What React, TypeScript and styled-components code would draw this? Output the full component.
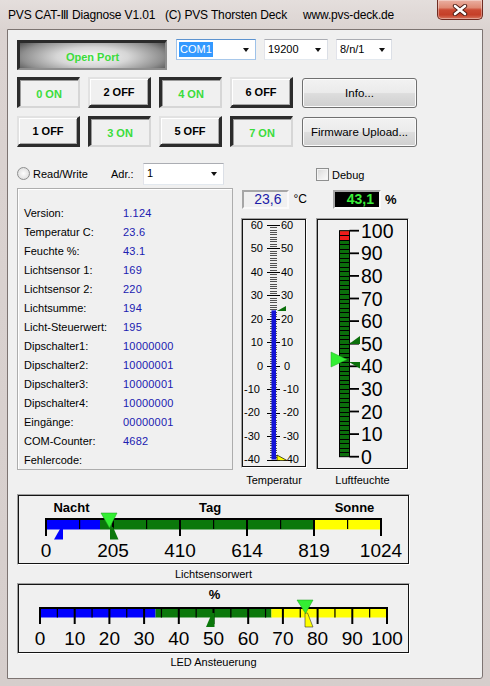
import React from "react";
import styled, { createGlobalStyle } from "styled-components";

const GlobalStyle = createGlobalStyle`
  html, body { margin: 0; padding: 0; background: #d8d1cf; }
  body { font-family: "Liberation Sans", Arial, sans-serif; font-size: 11px; color: #000; }
  * { box-sizing: border-box; }
`;

const UI_FONT = `"Liberation Sans", Arial, sans-serif`;

const Window = styled.div`
  width: 490px;
  height: 686px;
  display: flex;
  flex-direction: column;
  background: linear-gradient(180deg, #e4dedc 0px, #dbd3d1 30px, #d6cecc 100%);
  overflow: hidden;
`;

const TitleBar = styled.div`
  height: 29px;
  display: flex;
  align-items: flex-start;
  padding-left: 8px;
  flex-shrink: 0;
`;

const TitleText = styled.div`
  flex: 1;
  display: flex;
  padding-top: 7px;
  font-family: "Liberation Sans", "DejaVu Sans", sans-serif;
  font-size: 12px;
  line-height: 16px;
  letter-spacing: -0.15px;
  color: #000;
  white-space: nowrap;
`;

const TitleSeg = styled.span<{ $w?: number }>`
  display: inline-block;
  width: ${(p) => (p.$w ? `${p.$w}px` : "auto")};
`;

const CloseButton = styled.div`
  width: 46px;
  height: 20px;
  margin-right: 7px;
  display: flex;
  align-items: center;
  justify-content: center;
  border: 1px solid #6f2b21;
  border-top: none;
  border-radius: 0 0 5px 5px;
  background: linear-gradient(180deg, #eab0a2 0%, #df8a74 40%, #cb4a33 52%, #c53f28 78%, #d7765f 100%);
  box-shadow: inset 0 0 0 1px rgba(255, 255, 255, 0.35);
`;

const ClientArea = styled.div`
  margin: 0 7px;
  height: 650px;
  border: 1px solid #7d7472;
  border-radius: 0 0 3px 0;
  background: #f0f0f0;
  padding: 9px 0 0 9px;
  display: flex;
  flex-direction: column;
  font-family: ${UI_FONT};
  font-size: 11px;
`;

const Row = styled.div<{ $mt?: number; $h: number }>`
  display: flex;
  align-items: flex-start;
  height: ${(p) => p.$h}px;
  margin-top: ${(p) => p.$mt ?? 0}px;
  flex-shrink: 0;
`;

const OpenPortButton = styled.div`
  width: 150px;
  height: 30px;
  margin-top: 1px;
  display: flex;
  align-items: center;
  justify-content: center;
  border-style: solid;
  border-width: 3px 2px 2px 3px;
  border-color: #2b2b2b #8e8e8e #8e8e8e #2b2b2b;
  background: radial-gradient(ellipse 62% 95% at 50% 55%, #f7f7f7 0%, #d6d6d6 40%, #8f8f8f 78%, #505050 100%);
  color: #3bdc3b;
  font-weight: bold;
  font-size: 11px;
  padding-top: 2px;
`;

const ComboBox = styled.div<{ $w: number; $ml: number; $focused?: boolean; $h?: number }>`
  width: ${(p) => p.$w}px;
  height: ${(p) => p.$h ?? 21}px;
  margin-left: ${(p) => p.$ml}px;
  display: flex;
  align-items: center;
  justify-content: space-between;
  background: #fff;
  border: 1px solid;
  border-color: ${(p) => (p.$focused ? "#5d93cf #9ec2e9 #a8c8ea #9ec2e9" : "#abadb3 #dbdfe6 #e3e9ef #e2e3ea")};
  padding-left: 2px;
`;

const ComboText = styled.span<{ $selected?: boolean }>`
  font-size: 11px;
  line-height: 15px;
  padding: 0 1px;
  background: ${(p) => (p.$selected ? "#3399ff" : "transparent")};
  color: ${(p) => (p.$selected ? "#fff" : "#000")};
`;

const ComboArrow = styled.span`
  width: 0;
  height: 0;
  margin-right: 6px;
  border-left: 3.5px solid transparent;
  border-right: 3.5px solid transparent;
  border-top: 4px solid #111;
`;

const ButtonGrid = styled.div`
  display: flex;
  gap: 8px;
`;

const ToggleButton = styled.div<{ $on: boolean }>`
  width: 63px;
  height: 31px;
  display: flex;
  align-items: center;
  justify-content: center;
  border-style: solid;
  border-width: ${(p) => (p.$on ? "3px 2px 2px 3px" : "2px 3px 3px 2px")};
  border-color: ${(p) => (p.$on ? "#2c2c2c #d6d6d6 #d6d6d6 #2c2c2c" : "#e2e2e2 #2c2c2c #2c2c2c #e2e2e2")};
  background: #f0f0f0;
  box-shadow: ${(p) => (p.$on ? "inset 1px 1px 0 #9a9a9a" : "inset 1px 1px 0 #ffffff, inset -1px -1px 0 #a8a8a8")};
  color: ${(p) => (p.$on ? "#3bdc3b" : "#000")};
  font-weight: bold;
  font-size: 11px;
  padding-top: ${(p) => (p.$on ? 2 : 0)}px;
`;

const SysButton = styled.div`
  width: 115px;
  height: 30px;
  margin-top: 1px;
  margin-left: 9px;
  display: flex;
  align-items: center;
  justify-content: center;
  border: 1px solid #707070;
  border-radius: 3px;
  background: linear-gradient(180deg, #f2f2f2 0%, #ebebeb 48%, #dddddd 52%, #cfcfcf 100%);
  box-shadow: inset 0 0 0 1px #fbfbfb;
  font-size: 11.5px;
  color: #000;
`;

const OptionRow = styled.div`
  display: flex;
  align-items: center;
  height: 23px;
  margin-top: 15px;
  flex-shrink: 0;
`;

const RadioWrap = styled.label`
  width: 94px;
  display: flex;
  align-items: center;
  gap: 3px;
  font-size: 11px;
`;

const RadioCircle = styled.span`
  width: 13px;
  height: 13px;
  border-radius: 50%;
  border: 1px solid #8e8f8f;
  background: radial-gradient(circle at 50% 50%, #fdfdfd 0%, #e8e8e8 55%, #d2d2d2 100%);
`;

const FieldLabel = styled.span`
  width: 32px;
  font-size: 11px;
`;

const CheckWrap = styled.label`
  margin-left: 92px;
  display: flex;
  align-items: center;
  gap: 3px;
  font-size: 11px;
  margin-top: 2px;
`;

const CheckBox = styled.span`
  width: 13px;
  height: 13px;
  border: 1px solid #8e8f8f;
  box-shadow: inset 0 0 0 1px #f4f4f4;
  background: linear-gradient(135deg, #d8d8d8 0%, #ededed 55%, #fcfcfc 100%);
`;

const MainArea = styled.div`
  display: flex;
  align-items: flex-start;
  height: 300px;
  margin-top: 3px;
  flex-shrink: 0;
`;

const DataPanel = styled.div`
  width: 216px;
  height: 282px;
  border: 1px solid #adadad;
  box-shadow: inset 1px 1px 0 #ffffff;
  padding: 14px 0 0 6px;
  display: grid;
  grid-template-columns: 99px 1fr;
  grid-auto-rows: 19px;
  align-items: center;
  align-content: start;
`;

const DataLabel = styled.span`
  font-size: 11px;
  color: #000;
`;

const DataValue = styled.span`
  font-size: 11px;
  color: #2020b0;
  letter-spacing: 0.2px;
`;

const InstrumentGrid = styled.div`
  margin-left: 8px;
  display: grid;
  grid-template-columns: 66px 93px;
  grid-template-rows: 22px auto auto;
  column-gap: 9px;
`;

const ReadoutCell = styled.div<{ $ml: number }>`
  display: flex;
  align-items: center;
  padding-left: ${(p) => p.$ml}px;
`;

const ReadoutBox = styled.div<{ $dark?: boolean }>`
  width: 48px;
  height: 19px;
  display: flex;
  align-items: center;
  justify-content: flex-end;
  padding-right: 5px;
  border: 2px solid;
  border-color: #a6a6a6 #fafafa #fafafa #a6a6a6;
  background: ${(p) => (p.$dark ? "#000" : "#f0f0f0")};
  color: ${(p) => (p.$dark ? "#3aee3a" : "#1c1ca8")};
  font-weight: ${(p) => (p.$dark ? "bold" : "normal")};
  font-size: 14px;
`;

const Unit = styled.span<{ $bold?: boolean }>`
  margin-left: ${(p) => (p.$bold ? 4 : 5)}px;
  font-size: ${(p) => (p.$bold ? 13 : 12)}px;
  font-weight: ${(p) => (p.$bold ? "bold" : "normal")};
`;

const GaugeFrame = styled.div<{ $mt?: number }>`
  align-self: start;
  justify-self: start;
  margin-top: ${(p) => p.$mt ?? 0}px;
  border: 1px solid;
  border-color: #a0a0a0 #ffffff #ffffff #a0a0a0;
`;

const GaugeInner = styled.div`
  border: 1px solid #141414;
  background: #f0f0f0;
  svg { display: block; }
`;

const Caption = styled.div<{ $mt: number }>`
  margin-top: ${(p) => p.$mt}px;
  text-align: center;
  font-size: 11px;
  line-height: 14px;
`;

const GaugeSection = styled.div<{ $mt: number }>`
  width: 393px;
  margin-top: ${(p) => p.$mt}px;
  display: flex;
  flex-direction: column;
  flex-shrink: 0;
`;

const SVG_FONT = "Liberation Sans, Arial, sans-serif";

const crisp = (y: number) => Math.round(y) + 0.5;

/* ---------- Thermometer ---------- */
const tY = (v: number) => 225 + (60 - v) * 2.345;

const Thermometer: React.FC = () => {
  const majors = [60, 50, 40, 30, 20, 10, 0, -10, -20, -30, -40];
  const minors: number[] = [];
  for (let v = -40; v <= 60; v++) if (v % 10 !== 0) minors.push(v);
  const top = tY(23.6);
  return (
    <svg width={62} height={246} viewBox="243 220 62 246">
      {minors.map((v) => (
        <line key={v} x1={270} x2={277} y1={crisp(tY(v))} y2={crisp(tY(v))} stroke="#2a2a2a" strokeWidth={0.8} />
      ))}
      {majors.map((v) => (
        <line key={v} x1={267} x2={280} y1={crisp(tY(v))} y2={crisp(tY(v))} stroke="#000" strokeWidth={1} />
      ))}
      <rect x={271.5} y={top} width={4.5} height={tY(-40) - top} fill="#1414d8" />
      {majors.map((v) => (
        <text
          key={`l${v}`}
          x={v < 0 ? 260 : 263}
          y={tY(v) + 3.8}
          textAnchor="end"
          fontFamily={SVG_FONT}
          fontSize={11}
          fill="#000"
        >
          {v}
        </text>
      ))}
      {majors.map((v) => (
        <text
          key={`r${v}`}
          x={v < 0 ? 283 : v === 0 ? 284 : 281}
          y={tY(v) + 3.8}
          textAnchor="start"
          fontFamily={SVG_FONT}
          fontSize={11}
          fill="#000"
        >
          {v}
        </text>
      ))}
      <polygon points="277,311 286,306 286,311" fill="#0b6f0b" />
      <polygon points="277,455 277,460.5 287,460.5" fill="#ffff00" stroke="#000" strokeWidth={0.7} />
    </svg>
  );
};

/* ---------- Humidity ---------- */
const hY = (v: number) => 456.7 - v * 2.26;

const Hygrometer: React.FC = () => {
  const majors = [100, 90, 80, 70, 60, 50, 40, 30, 20, 10, 0];
  const segs: number[] = [];
  for (let v = 2; v < 100; v += 2) segs.push(v);
  return (
    <svg width={89} height={248} viewBox="318 220 89 248">
      <rect x={339.5} y={hY(100)} width={10} height={hY(0) - hY(100)} fill="#0b6f0b" stroke="#000" strokeWidth={1} />
      <rect x={340} y={hY(100) + 0.5} width={9} height={hY(96) - hY(100)} fill="#ee1c1c" />
      {segs.map((v) => (
        <line key={v} x1={339.5} x2={349.5} y1={crisp(hY(v))} y2={crisp(hY(v))} stroke="#000" strokeWidth={1} />
      ))}
      {majors.map((v) => (
        <line key={`t${v}`} x1={349.5} x2={359} y1={hY(v)} y2={hY(v)} stroke="#000" strokeWidth={1.8} />
      ))}
      {majors.map((v) => (
        <text key={`l${v}`} x={361} y={hY(v) + 7} fontFamily={SVG_FONT} fontSize={19.5} fill="#000">
          {v}
        </text>
      ))}
      <polygon points="331,352 331,367 347,359.5" fill="#33ee33" stroke="#22a822" strokeWidth={0.5} />
      <polygon points="349,344 360,336 360,344" fill="#0b6f0b" />
      <polygon points="349,362 360,362 360,368.5" fill="#0b6f0b" />
    </svg>
  );
};

/* ---------- Light sensor ---------- */
const LightGauge: React.FC = () => {
  const majors = [0, 205, 410, 614, 819, 1024];
  const mx = (i: number) => 46 + i * 67;
  return (
    <svg width={389} height={67} viewBox="19 496 389 67">
      <text x={71.5} y={511.5} textAnchor="middle" fontFamily={SVG_FONT} fontSize={13} fontWeight="bold">
        Nacht
      </text>
      <text x={210} y={511.5} textAnchor="middle" fontFamily={SVG_FONT} fontSize={13} fontWeight="bold">
        Tag
      </text>
      <text x={354.5} y={511.5} textAnchor="middle" fontFamily={SVG_FONT} fontSize={13} fontWeight="bold">
        Sonne
      </text>
      <rect x={46} y={519} width={54} height={10.5} fill="#0000ff" />
      <rect x={100} y={519} width={214} height={10.5} fill="#0b780b" />
      <rect x={314} y={519} width={67} height={10.5} fill="#ffff00" />
      <rect x={45} y={518} width={337} height={2} fill="#000" />
      {majors.map((_, i) => (
        <rect key={`m${i}`} x={mx(i) - 1} y={518} width={2} height={18} fill="#000" />
      ))}
      {[0, 1, 2, 3, 4].map((i) => (
        <rect key={`n${i}`} x={mx(i) + 33} y={518} width={1.2} height={11} fill="#000" />
      ))}
      {majors.map((v, i) => (
        <text key={`t${v}`} x={mx(i)} y={556.8} textAnchor="middle" fontFamily={SVG_FONT} fontSize={19}>
          {v}
        </text>
      ))}
      <polygon points="60,529 63,529 63,539.5 54,539.5" fill="#0000ff" />
      <polygon points="110,527 113,527 118.5,539.5 110,539.5" fill="#0b780b" />
      <polygon points="101,513 117,513 109.5,528" fill="#33ee33" stroke="#1a9a1a" strokeWidth={0.5} />
    </svg>
  );
};

/* ---------- LED ---------- */
const LedGauge: React.FC = () => {
  const lx = (v: number) => 40 + (v / 100) * 347;
  const majors = [0, 10, 20, 30, 40, 50, 60, 70, 80, 90, 100];
  const minors = [5, 15, 25, 35, 45, 55, 65, 75, 85, 95];
  return (
    <svg width={389} height={67} viewBox="19 585 389 67">
      <text x={214.5} y={598.8} textAnchor="middle" fontFamily={SVG_FONT} fontSize={13} fontWeight="bold">
        %
      </text>
      <rect x={40} y={608} width={lx(33.3) - 40} height={9.5} fill="#0000ff" />
      <rect x={lx(33.3)} y={608} width={lx(66.7) - lx(33.3)} height={9.5} fill="#0b780b" />
      <rect x={lx(66.7)} y={608} width={387 - lx(66.7)} height={9.5} fill="#ffff00" />
      <rect x={39} y={607} width={349} height={2} fill="#000" />
      {majors.map((v) => (
        <rect key={`m${v}`} x={lx(v) - 1} y={607} width={2} height={17} fill="#000" />
      ))}
      {minors.map((v) => (
        <rect key={`n${v}`} x={lx(v) - 0.6} y={607} width={1.2} height={10.5} fill="#000" />
      ))}
      {majors.map((v) => (
        <text key={`t${v}`} x={lx(v)} y={644.8} textAnchor="middle" fontFamily={SVG_FONT} fontSize={19}>
          {v}
        </text>
      ))}
      <polygon points="212,613 214.5,613 214.5,627 206,627" fill="#0b780b" />
      <polygon points="305,613 307.5,613 313,627 305,627" fill="#ffff00" stroke="#333" strokeWidth={0.6} />
      <polygon points="297,600 313,600 305.5,613.5" fill="#33ee33" stroke="#1a9a1a" strokeWidth={0.5} />
    </svg>
  );
};

const dataRows: [string, string][] = [
  ["Version:", "1.124"],
  ["Temperatur C:", "23.6"],
  ["Feuchte %:", "43.1"],
  ["Lichtsensor 1:", "169"],
  ["Lichtsensor 2:", "220"],
  ["Lichtsumme:", "194"],
  ["Licht-Steuerwert:", "195"],
  ["Dipschalter1:", "10000000"],
  ["Dipschalter2:", "10000001"],
  ["Dipschalter3:", "10000001"],
  ["Dipschalter4:", "10000000"],
  ["Eingänge:", "00000001"],
  ["COM-Counter:", "4682"],
  ["Fehlercode:", ""],
];

const row1 = [
  { label: "0 ON", on: true },
  { label: "2 OFF", on: false },
  { label: "4 ON", on: true },
  { label: "6 OFF", on: false },
];
const row2 = [
  { label: "1 OFF", on: false },
  { label: "3 ON", on: true },
  { label: "5 OFF", on: false },
  { label: "7 ON", on: true },
];

export default function App() {
  return (
    <>
      <GlobalStyle />
      <Window>
        <TitleBar>
          <TitleText>
            <TitleSeg $w={157}>PVS CAT-Ⅲ Diagnose V1.01</TitleSeg>
            <TitleSeg $w={138}>(C) PVS Thorsten Deck</TitleSeg>
            <TitleSeg>www.pvs-deck.de</TitleSeg>
          </TitleText>
          <CloseButton>
            <svg width={16} height={12} viewBox="0 0 16 12">
              <path d="M3 2 L13 10 M13 2 L3 10" stroke="#4a1a12" strokeWidth={4.4} strokeLinecap="round" />
              <path d="M3 2 L13 10 M13 2 L3 10" stroke="#ffffff" strokeWidth={2.6} strokeLinecap="round" />
            </svg>
          </CloseButton>
        </TitleBar>

        <ClientArea>
          <Row $h={31}>
            <OpenPortButton>Open Port</OpenPortButton>
            <ComboBox $w={80} $ml={9} $focused>
              <ComboText $selected>COM1</ComboText>
              <ComboArrow />
            </ComboBox>
            <ComboBox $w={64} $ml={8}>
              <ComboText>19200</ComboText>
              <ComboArrow />
            </ComboBox>
            <ComboBox $w={56} $ml={8}>
              <ComboText>8/n/1</ComboText>
              <ComboArrow />
            </ComboBox>
          </Row>

          <Row $h={31} $mt={7}>
            <ButtonGrid>
              {row1.map((b) => (
                <ToggleButton key={b.label} $on={b.on}>
                  {b.label}
                </ToggleButton>
              ))}
            </ButtonGrid>
            <SysButton>Info...</SysButton>
          </Row>

          <Row $h={31} $mt={8}>
            <ButtonGrid>
              {row2.map((b) => (
                <ToggleButton key={b.label} $on={b.on}>
                  {b.label}
                </ToggleButton>
              ))}
            </ButtonGrid>
            <SysButton>Firmware Upload...</SysButton>
          </Row>

          <OptionRow>
            <RadioWrap>
              <RadioCircle />
              Read/Write
            </RadioWrap>
            <FieldLabel>Adr.:</FieldLabel>
            <ComboBox $w={81} $ml={0} $h={22}>
              <ComboText>1</ComboText>
              <ComboArrow />
            </ComboBox>
            <CheckWrap>
              <CheckBox />
              Debug
            </CheckWrap>
          </OptionRow>

          <MainArea>
            <DataPanel>
              {dataRows.map(([k, v]) => (
                <React.Fragment key={k}>
                  <DataLabel>{k}</DataLabel>
                  <DataValue>{v}</DataValue>
                </React.Fragment>
              ))}
            </DataPanel>

            <InstrumentGrid>
              <ReadoutCell $ml={1}>
                <ReadoutBox>23,6</ReadoutBox>
                <Unit>°C</Unit>
              </ReadoutCell>
              <ReadoutCell $ml={17}>
                <ReadoutBox $dark>43,1</ReadoutBox>
                <Unit $bold>%</Unit>
              </ReadoutCell>

              <GaugeFrame $mt={8}>
                <GaugeInner>
                  <Thermometer />
                </GaugeInner>
              </GaugeFrame>
              <GaugeFrame $mt={8}>
                <GaugeInner>
                  <Hygrometer />
                </GaugeInner>
              </GaugeFrame>

              <Caption $mt={3}>Temperatur</Caption>
              <Caption $mt={3}>Luftfeuchte</Caption>
            </InstrumentGrid>
          </MainArea>

          <GaugeSection $mt={6}>
            <GaugeFrame>
              <GaugeInner>
                <LightGauge />
              </GaugeInner>
            </GaugeFrame>
            <Caption $mt={2}>Lichtsensorwert</Caption>
          </GaugeSection>

          <GaugeSection $mt={2}>
            <GaugeFrame>
              <GaugeInner>
                <LedGauge />
              </GaugeInner>
            </GaugeFrame>
            <Caption $mt={1}>LED Ansteuerung</Caption>
          </GaugeSection>
        </ClientArea>
      </Window>
    </>
  );
}
